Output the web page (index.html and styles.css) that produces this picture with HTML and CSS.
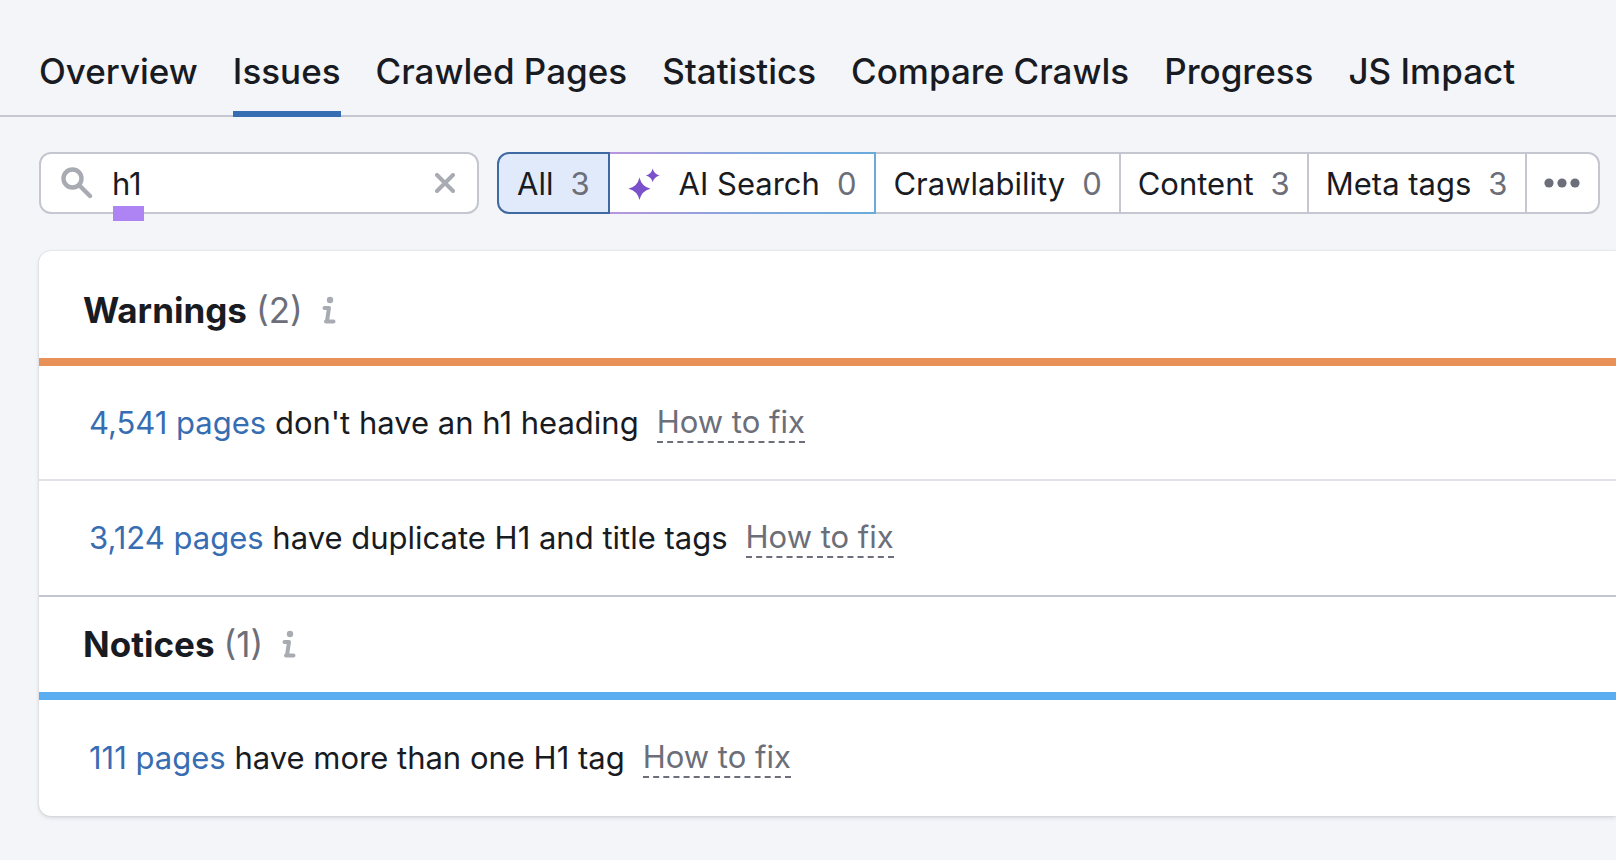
FILE: index.html
```html
<!DOCTYPE html>
<html lang="en">
<head>
    <meta charset="UTF-8">
    <meta name="viewport" content="width=device-width, initial-scale=1.0">
    <title>Site Audit: Issues</title>
    <link rel="stylesheet" href="styles.css">
</head>
<body>

    <nav class="tabs">
        <a class="tab" href="#">Overview</a>
        <a class="tab active" href="#">Issues</a>
        <a class="tab" href="#">Crawled Pages</a>
        <a class="tab" href="#">Statistics</a>
        <a class="tab" href="#">Compare Crawls</a>
        <a class="tab" href="#">Progress</a>
        <a class="tab" href="#">JS Impact</a>
    </nav>

    <div class="controls">
        <div class="search">
            <svg class="search-icon" width="32" height="32" viewBox="0 0 32 32" fill="none" stroke="currentColor" stroke-width="4.4" stroke-linecap="round">
                <circle cx="11.5" cy="11.5" r="9"/>
                <path d="M18.5 18.5 L29 29"/>
            </svg>
            <input type="text" id="search" value="h1" aria-label="Search issues">
            <button class="clear" aria-label="Clear">
                <svg width="20" height="20" viewBox="0 0 20 20" fill="none" stroke="currentColor" stroke-width="4" stroke-linecap="round">
                    <path d="M2 2 L18 18 M18 2 L2 18"/>
                </svg>
            </button>
            <span class="marker"></span>
        </div>

        <div class="filters">
            <button class="filter selected">All <span class="count">3</span></button>
            <button class="filter ai">
                <svg class="sparkle" width="32" height="32" viewBox="0 0 32 32" fill="currentColor">
                    <path d="M11.5 9.5 Q13.6 18.6 22.5 20.7 Q13.6 22.8 11.5 32 Q9.4 22.8 0.5 20.7 Q9.4 18.6 11.5 9.5 Z"/>
                    <path d="M24.7 0.5 Q26 6.1 31.5 7.4 Q26 8.7 24.7 14.3 Q23.4 8.7 17.9 7.4 Q23.4 6.1 24.7 0.5 Z"/>
                </svg>
                AI Search <span class="count">0</span>
            </button>
            <button class="filter">Crawlability <span class="count">0</span></button>
            <button class="filter">Content <span class="count">3</span></button>
            <button class="filter">Meta tags <span class="count">3</span></button>
            <button class="filter more" aria-label="More categories">
                <svg width="36" height="10" viewBox="0 0 36 10" fill="currentColor">
                    <circle cx="5" cy="5" r="4.6"/>
                    <circle cx="18" cy="5" r="4.6"/>
                    <circle cx="31" cy="5" r="4.6"/>
                </svg>
            </button>
        </div>
    </div>

    <main class="card">
        <section class="group warnings">
            <h2>Warnings <span class="total">(2)</span>
                <svg class="info" width="14" height="28" viewBox="0 0 14 28" fill="none" stroke="currentColor" stroke-width="4" stroke-linecap="round" stroke-linejoin="round">
                    <circle cx="8" cy="4" r="3.2" fill="currentColor" stroke="none"/>
                    <path d="M2.5 12 H7 L5 25 M4 25.5 H11.5"/>
                </svg>
            </h2>
            <div class="issue">
                <p><a class="pages" href="#">4,541 pages</a> don't have an h1 heading</p>
                <button class="fix">How to fix</button>
            </div>
            <div class="issue">
                <p><a class="pages" href="#">3,124 pages</a> have duplicate H1 and title tags</p>
                <button class="fix">How to fix</button>
            </div>
        </section>

        <section class="group notices">
            <h2>Notices <span class="total">(1)</span>
                <svg class="info" width="14" height="28" viewBox="0 0 14 28" fill="none" stroke="currentColor" stroke-width="4" stroke-linecap="round" stroke-linejoin="round">
                    <circle cx="8" cy="4" r="3.2" fill="currentColor" stroke="none"/>
                    <path d="M2.5 12 H7 L5 25 M4 25.5 H11.5"/>
                </svg>
            </h2>
            <div class="issue">
                <p><a class="pages" href="#">111 pages</a> have more than one H1 tag</p>
                <button class="fix">How to fix</button>
            </div>
        </section>
    </main>

</body>
</html>
```
FILE: styles.css
```css
* {
    box-sizing: border-box;
}
body {
    margin: 0;
    min-height: 100vh;
    background: #f4f5f9;
    color: #191b23;
    font-family: Inter, sans-serif;
    font-size: 31px;
    line-height: 40px;
}
a {
    text-decoration: none;
}
button, input {
    font: inherit;
    color: inherit;
    border: none;
    background: none;
    padding: 0;
}
button {
    cursor: pointer;
}
svg {
    flex: none;
}

/* Tabs */
.tabs {
    display: flex;
    gap: 35px;
    padding: 51px 39px 0;
    box-shadow: inset 0 -2px #c4c7cf;
    white-space: nowrap;
}
.tab {
    padding-bottom: 20px;
    border-bottom: 6px solid transparent;
    color: #191b23;
    font-size: 35px;
    font-weight: 500;
}
.tab.active {
    border-bottom-color: #376db3;
}

/* Search and filters */
.controls {
    display: flex;
    gap: 18px;
    padding: 35px 16px 37px 39px;
}
.search {
    position: relative;
    display: flex;
    align-items: center;
    flex: none;
    width: 440px;
    height: 62px;
    padding: 0 22px 0 20px;
    background: #fff;
    border: 2px solid #c4c7cf;
    border-radius: 12px;
}
.search-icon {
    color: #a9abb3;
}
.search input {
    flex: 1;
    width: 100%;
    min-width: 0;
    margin-left: 19px;
    padding-top: 2px;
    outline: none;
}
.clear {
    display: flex;
    color: #a9abb3;
}
/* highlight under the search term */
.marker {
    position: absolute;
    left: 72px;
    top: 52px;
    width: 31px;
    height: 15px;
    background: #ae83f3;
}
.filters {
    display: flex;
    flex: 1;
    white-space: nowrap;
}
.filter {
    display: flex;
    align-items: center;
    justify-content: center;
    gap: 17px;
    height: 62px;
    padding: 2px 17px 0;
    background: #fff;
    border: 2px solid #c4c7cf;
}
.filter + .filter {
    margin-left: -2px;
}
.filter:first-child {
    padding: 2px 18px 0;
    border-radius: 12px 0 0 12px;
}
.filter:last-child {
    padding: 0;
    border-radius: 0 12px 12px 0;
}
.filter.selected {
    z-index: 2;
    background: #e0eafa;
    border-color: #3f69a3;
}
.filter.ai {
    z-index: 1;
    padding: 2px 18px 0;
    border-color: transparent;
    background: linear-gradient(#fff, #fff) padding-box,
        linear-gradient(90deg, #b995dc, #83a5dc 50%, #69abda) border-box;
}
.sparkle {
    margin-right: 2px;
    color: #7b50cb;
}
.count, .total, .more {
    color: #6c6e79;
}
.filter.more {
    flex: 1;
    max-width: 75px;
}

/* Issues list */
.card {
    margin-left: 39px;
    background: #fff;
    border-radius: 12px 0 0 12px;
    box-shadow: 0 0 2px rgba(25, 27, 35, 0.16), 0 2px 4px rgba(25, 27, 35, 0.12);
}
.group h2 {
    display: flex;
    align-items: center;
    gap: 9px;
    margin: 0;
    padding: 27px 44px 28px;
    border-bottom: 8px solid;
    font-size: 35px;
    font-weight: 700;
}
.total {
    font-weight: 400;
}
.info {
    margin-left: 10px;
    color: #a9abb3;
}
.group.warnings h2 {
    padding-top: 39px;
    border-color: #e8925a;
}
.group.notices h2 {
    border-color: #5badf1;
}
.issue {
    display: flex;
    align-items: center;
    gap: 18px;
    min-height: 113px;
    padding: 0 50px;
}
.issue:last-child {
    min-height: 116px;
}
.issue + .issue {
    border-top: 2px solid #e0e1e9;
}
.issue p {
    margin: 0;
}
.notices {
    border-top: 2px solid #c4c7cf;
}
.pages {
    color: #376db3;
}
.fix {
    color: #6c6e79;
    line-height: 38px;
    border-bottom: 2px dashed #6c6e79;
}
```
